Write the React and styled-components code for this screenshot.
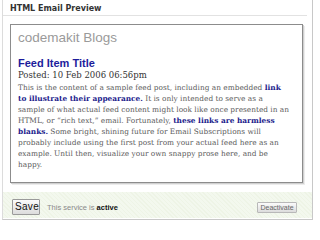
import React from 'react';
import styled, { createGlobalStyle } from 'styled-components';

const GlobalStyle = createGlobalStyle`
  body {
    margin: 0;
    background: #ffffff;
    font-family: "Liberation Sans", Arial, sans-serif;
  }
`;

const Panel = styled.div`
  margin-left: 2px;
  width: 309px;
  padding-bottom: 1px;
  border-left: 1px solid #dcdcdc;
  border-right: 1px solid #c8c8c8;
  border-bottom: 1px solid #c8c8c8;
  display: flex;
  flex-direction: column;
`;

const Header = styled.div`
  box-sizing: border-box;
  height: 16px;
  margin-right: 5px;
  padding: 2px 0 0 7px;
  border-bottom: 1px solid #e2e2e2;
  font-family: "DejaVu Sans", Verdana, sans-serif;
  font-weight: bold;
  font-size: 8px;
  line-height: 13px;
  color: #333333;
`;

const Preview = styled.div`
  box-sizing: border-box;
  margin: 8px 9px 0 7px;
  height: 159px;
  padding: 5px 2px 0 7px;
  border: 1px solid #8c8c8c;
  box-shadow: 1px 1px 0 #d0d0d0, 2px 2px 0 #ececec;
  background: #ffffff;
`;

const BlogName = styled.div`
  font-family: "Liberation Sans", Arial, sans-serif;
  font-size: 13.5px;
  line-height: 16px;
  color: #9a9a9a;
`;

const ItemTitle = styled.div`
  margin-top: 11px;
  font-family: "Liberation Sans", Arial, sans-serif;
  font-weight: bold;
  font-size: 11px;
  line-height: 13px;
  color: #1c1c9c;
`;

const Posted = styled.div`
  font-family: "DejaVu Serif", Georgia, serif;
  font-size: 8.5px;
  line-height: 11px;
  color: #333333;
`;

const Body = styled.p`
  margin: 1px 0 0;
  white-space: nowrap;
  font-family: "DejaVu Serif", Georgia, serif;
  font-size: 7.4px;
  line-height: 11px;
  color: #5a5a5a;
`;

const Link = styled.a`
  font-weight: bold;
  color: #1c1c8c;
  text-decoration: none;
`;

const Footer = styled.div`
  box-sizing: border-box;
  margin-top: 9px;
  height: 26px;
  padding: 4px 15px 0 9px;
  display: flex;
  align-items: center;
  gap: 7px;
  background: repeating-linear-gradient(45deg, #eef4e6 0 1px, #f3f8ee 1px 3px);
`;

const Button = styled.button`
  box-sizing: border-box;
  padding: 0 2px;
  width: ${p => (p.$small ? 40 : 28)}px;
  height: ${p => (p.$small ? 11 : 16)}px;
  border: 1px solid ${p => (p.$small ? '#b8b8b8' : '#9a9a9a')};
  border-radius: 1px;
  background: linear-gradient(#fbfbfb, #dcdcdc);
  font-family: "Liberation Sans", Arial, sans-serif;
  font-size: ${p => (p.$small ? 7 : 10)}px;
  letter-spacing: ${p => (p.$small ? 0 : 0.3)}px;
  color: ${p => (p.$small ? '#666666' : '#111111')};
  line-height: 1;
  margin-left: ${p => (p.$small ? 'auto' : '0')};
`;

const Status = styled.span`
  font-size: 7.5px;
  color: #8a8a8a;
  b {
    color: #111111;
  }
`;

export default function App() {
  return (
    <>
      <GlobalStyle />
      <Panel>
        <Header>HTML Email Preview</Header>
        <Preview>
          <BlogName>codemakit Blogs</BlogName>
          <ItemTitle>Feed Item Title</ItemTitle>
          <Posted>Posted: 10 Feb 2006 06:56pm</Posted>
          <Body>
            This is the content of a sample feed post, including an embedded <Link href="#">link</Link>
            <br />
            <Link href="#">to illustrate their appearance.</Link> It is only intended to serve as a
            <br />
            sample of what actual feed content might look like once presented in an
            <br />
            HTML, or “rich text,” email. Fortunately, <Link href="#">these links are harmless</Link>
            <br />
            <Link href="#">blanks.</Link> Some bright, shining future for Email Subscriptions will
            <br />
            probably include using the first post from your actual feed here as an
            <br />
            example. Until then, visualize your own snappy prose here, and be
            <br />
            happy.
          </Body>
        </Preview>
        <Footer>
          <Button>Save</Button>
          <Status>
            This service is <b>active</b>
          </Status>
          <Button $small>Deactivate</Button>
        </Footer>
      </Panel>
    </>
  );
}
